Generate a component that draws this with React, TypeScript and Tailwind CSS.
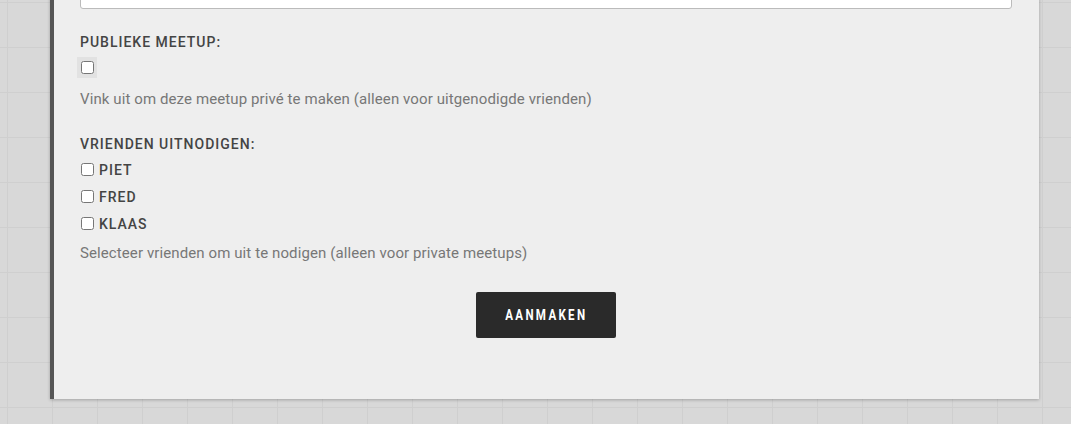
import { useState } from "react";

const friends = ["PIET", "FRED", "KLAAS"];

export default function App() {
  const [isPublic, setIsPublic] = useState(false);
  const [invited, setInvited] = useState<string[]>([]);

  function toggleFriend(name: string) {
    setInvited((prev) =>
      prev.includes(name) ? prev.filter((n) => n !== name) : [...prev, name]
    );
  }

  return (
    <div className="h-[424px] w-full overflow-hidden bg-[#d8d8d8] bg-[linear-gradient(#cfcfcf_1px,transparent_1px),linear-gradient(90deg,#cfcfcf_1px,transparent_1px)] bg-[size:45px_45px] bg-[position:7px_2px] font-['Roboto',sans-serif]">
      <div className="ml-[50px] -mt-[30px] w-[989px] h-[429px] border-l-4 border-[#555555] bg-[#eeeeee] pl-[26px] pr-[27px] shadow-[0_1px_3px_rgba(0,0,0,0.25)]">
        <input
          type="text"
          className="block h-[39px] w-full rounded-b-[3px] border border-[#bbbbbb] bg-white"
        />

        <div className="mt-[23px] text-[14px] font-medium tracking-[1px] text-[#444444]">
          PUBLIEKE MEETUP:
        </div>
        <div className="mt-[4px] flex h-[21px] w-[20px] items-center justify-center -ml-[3px] bg-[#e2e2e2]">
          <input
            type="checkbox"
            checked={isPublic}
            onChange={() => setIsPublic(!isPublic)}
            className="h-[13px] w-[13px]"
          />
        </div>
        <p className="mt-[11px] text-[15px] leading-[20px] tracking-[0.1px] text-[#777777]">
          Vink uit om deze meetup privé te maken (alleen voor uitgenodigde vrienden)
        </p>

        <div className="mt-[25px] text-[14px] font-medium tracking-[1px] text-[#444444]">
          VRIENDEN UITNODIGEN:
        </div>
        <div className="mt-[5px] flex flex-col gap-[7px]">
          {friends.map((name) => (
            <label key={name} className="flex h-[20px] items-center gap-[5px] text-[14px] font-medium tracking-[1px] text-[#444444]">
              <input
                type="checkbox"
                checked={invited.includes(name)}
                onChange={() => toggleFriend(name)}
                className="ml-[1px] -mt-[2px] h-[13px] w-[13px]"
              />
              {name}
            </label>
          ))}
        </div>
        <p className="mt-[9px] text-[15px] leading-[20px] tracking-[0.1px] text-[#777777]">
          Selecteer vrienden om uit te nodigen (alleen voor private meetups)
        </p>

        <div className="mt-[29px] flex justify-center">
          <button className="flex h-[46px] w-[140px] items-center justify-center rounded-[2px] bg-[#2a2a2a] text-white">
            <span className="inline-block scale-x-[0.77] text-[15px] font-bold tracking-[3px]">
              AANMAKEN
            </span>
          </button>
        </div>
      </div>
    </div>
  );
}
